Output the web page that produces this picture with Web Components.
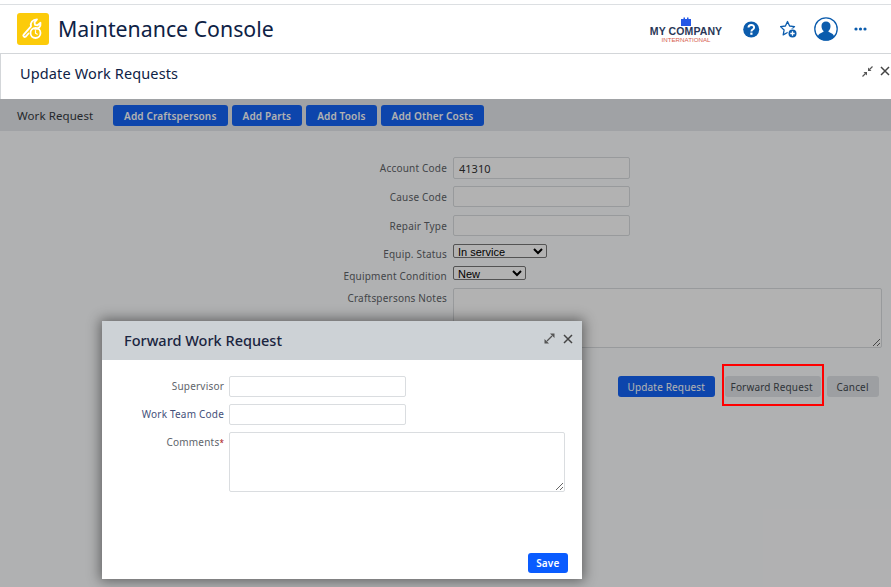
<!DOCTYPE html>
<html>
<head>
<meta charset="utf-8">
<title>Maintenance Console</title>
<style>
    html, body { margin: 0; height: 100%; }
    body { font-family: "Noto Sans", "Open Sans", sans-serif; background: #fff; overflow: hidden; }
</style>
</head>
<body>
<console-page>
    <app-header slot="header" title="Maintenance Console"></app-header>
    <panel-title slot="title" title="Update Work Requests"></panel-title>
    <work-toolbar slot="toolbar" label="Work Request">
        <action-button>Add Craftspersons</action-button>
        <action-button>Add Parts</action-button>
        <action-button>Add Tools</action-button>
        <action-button>Add Other Costs</action-button>
    </work-toolbar>
    <request-form slot="form"></request-form>
    <forward-dialog slot="dialog" title="Forward Work Request"></forward-dialog>
</console-page>

<script>
class ConsolePage extends HTMLElement{
    constructor(){
        super();
        this.attachShadow({mode : "open"}).innerHTML = `
            <style>
                :host{ display: flex; flex-direction: column; height: 587px; }
                .content{ position: relative; flex: 1; background: #fdfeff; }
                .backdrop{ position: absolute; inset: 0; background: rgba(0,0,0,.3); }
                .dialog{ position: absolute; left: 102px; top: 222px; }
                .highlight{ position: absolute; left: 722px; top: 265px; width: 98px; height: 38px; border: 2px solid #f00; }
            </style>
            <slot name="header"></slot>
            <slot name="title"></slot>
            <div class="content">
                <slot name="toolbar"></slot>
                <slot name="form"></slot>
                <div class="backdrop"></div>
                <div class="highlight"></div>
                <div class="dialog"><slot name="dialog"></slot></div>
            </div>
        `;
    }
}

class AppHeader extends HTMLElement{
    constructor(){
        super();
        this.attachShadow({mode : "open"}).innerHTML = `
            <style>
                :host{ display: flex; align-items: center; height: 48px; margin-top: 4px; padding: 0 24px 0 17px;
                    border-top: 1px solid #dcdfe2; border-bottom: 1px solid #d3d6d9; background: #fff; }
                .app-icon{ width: 32px; height: 32px; border-radius: 3px; background: #fccb0a; margin-right: 9px; display: block; }
                h1{ margin: 0; font-size: 21.300px; line-height: 30px; font-weight: 400; color: #0e2245; flex: 1; padding-bottom: 1px; }
                .logo{ display: flex; flex-direction: column; align-items: center; width: 74px; margin-right: 20px; margin-top: 1px; }
                .logo svg{ display: block; height: 9px; }
                .logo b{ font: 700 10.500px/11px "Liberation Sans", sans-serif; color: #2a3858; white-space: nowrap; letter-spacing: .1px; }
                .logo span{ font: 400 6.200px/6px "Liberation Sans", sans-serif; color: #d6604f; }
                .tools{ display: flex; align-items: center; }
                .tools svg{ display: block; }
            </style>
            <svg class="app-icon" viewBox="0 0 32 32">
                <g fill="none" stroke="#fff" stroke-linecap="round" stroke-linejoin="round">
                    <path stroke-width="1.800" d="M11.500 20.500l-3 3.300c-1.200 .8-2.800-1-2-2l7.500-8.500c-1-3.500 1.500-7 6-7l-2.500 3 .5 2.500 2.500 .5 3-2.500c.5 3.500-2 6.500-5.500 6"/>
                    <circle stroke-width="1.800" cx="18.500" cy="20" r="5"/>
                    <path stroke-width="1.200" d="M18.500 17.500v2.700l1.800 1"/>
                </g>
            </svg>
            <h1>${this.getAttribute("title")}</h1>
            <div class="logo">
                <svg viewBox="0 0 10 9" width="10"><path fill="#2458e6" d="M0 2h2.500V.5h1.500V2h2V.5h1.500V2H10v7H0z"/></svg>
                <b>MY COMPANY</b>
                <span>INTERNATIONAL</span>
            </div>
            <div class="tools">
                <svg width="17" height="17" viewBox="0 0 17 17" style="margin-right:20px">
                    <circle cx="8.200" cy="8.500" r="8" fill="#0b5cad"/>
                    <path d="M5.500 6.600c0-3.500 5.600-3.500 5.600-.2 0 2.200-2.700 2-2.700 4" fill="none" stroke="#fff" stroke-width="2"/>
                    <rect x="7.300" y="11.600" width="2.200" height="2.200" fill="#fff"/>
                </svg>
                <svg width="18" height="19" viewBox="0 0 18 19" style="margin-right:16px">
                    <path d="M7.500 1.500l2.100 4.500 4.900.6-3.600 3.400.9 4.900-4.300-2.400-4.300 2.400.9-4.900L.5 6.600l4.900-.6z" fill="none" stroke="#0b5cad" stroke-width="1.300" stroke-linejoin="round"/>
                    <circle cx="12.500" cy="13.500" r="5" fill="#fff"/>
                    <circle cx="12.500" cy="13.500" r="4" fill="#0b5cad"/>
                    <path d="M12.500 11.300v4.400M10.300 13.500h4.400" stroke="#fff" stroke-width="1.300"/>
                </svg>
                <svg width="24" height="24" viewBox="0 0 24 24" style="margin-right:16px">
                    <circle cx="12" cy="12" r="11.200" fill="#fff" stroke="#0b5cad" stroke-width="1.300"/>
                    <path d="M3.800 19.700c.6-3.700 5-3.700 6-5.500-1.600-1.300-2.300-3-2.300-5.200 0-2.800 1.800-4.500 4.500-4.500s4.500 1.700 4.500 4.500c0 2.200-.7 3.900-2.300 5.200 1 1.800 5.400 1.800 6 5.500-2 2.300-5 3.700-8.200 3.700s-6.200-1.400-8.200-3.700z" fill="#0b5cad"/>
                </svg>
                <svg width="13" height="4" viewBox="0 0 13 4">
                    <circle cx="2" cy="2" r="1.600" fill="#0b5cad"/><circle cx="6.500" cy="2" r="1.600" fill="#0b5cad"/><circle cx="11" cy="2" r="1.600" fill="#0b5cad"/>
                </svg>
            </div>
        `;
    }
}

class PanelTitle extends HTMLElement{
    constructor(){
        super();
        this.attachShadow({mode : "open"}).innerHTML = `
            <style>
                :host{ display: flex; align-items: center; height: 45px; padding: 0 1px 0 20px; background: #fff;
                    border-left: 1px solid #d3d6d9; box-sizing: border-box; }
                h2{ margin: 0; flex: 1; font-size: 14.500px; font-weight: 400; color: #0e2245; margin-left: -1px; padding-bottom: 7px; letter-spacing: .13px; }
                svg{ display: block; margin-bottom: 11px; }
            </style>
            <h2>${this.getAttribute("title")}</h2>
            <svg width="11" height="11" viewBox="0 0 11 11" style="margin-right:7px"><path d="M10.500 .5L7.500 3.500M3.500 7.500L.5 10.500" stroke="#555" stroke-width="1.200"/><path d="M6 5V1.500L9.500 5zM5 6v3.500L1.500 6z" fill="#555"/></svg>
            <svg width="10" height="10" viewBox="0 0 10 10"><path d="M1 1l8 8M9 1l-8 8" stroke="#444" stroke-width="1.500"/></svg>
        `;
    }
}

class WorkToolbar extends HTMLElement{
    constructor(){
        super();
        this.attachShadow({mode : "open"}).innerHTML = `
            <style>
                :host{ display: flex; align-items: center; gap: 4px; height: 32px; padding-left: 17px; background: #e6e9ed; box-sizing: border-box; }
                span{ font-size: 11.500px; color: #34393f; width: 92px; letter-spacing: .08px; padding-top: 1px; }
            </style>
            <span>${this.getAttribute("label")}</span>
            <slot></slot>
        `;
    }
}

class ActionButton extends HTMLElement{
    constructor(){
        super();
        this.attachShadow({mode : "open"}).innerHTML = `
            <style>
                :host{ display: inline-block; height: var(--h, 21px); padding: 0 var(--pad, 11px); border-radius: 3px;
                    background: var(--bg, #1464f6); color: var(--fg, #fff); font-size: 10px; font-weight: var(--weight, 600);
                    line-height: calc(var(--h, 21px) + var(--nudge, 2px)); white-space: nowrap; letter-spacing: .16px; }
            </style>
            <slot></slot>
        `;
    }
}

class FormRow extends HTMLElement{
    static get observedAttributes(){
        return ["label"];
    }
    constructor(){
        super();
        this.attachShadow({mode : "open"}).innerHTML = `
            <style>
                :host{ display: flex; gap: var(--label-gap, 6px); margin-bottom: var(--row-gap, 7px); }
                label{ width: var(--label-width, 447px); box-sizing: border-box; text-align: right; font-size: 10px; line-height: 14px;
                    padding-top: var(--label-top, 4px); color: var(--label-color, #5f6469); letter-spacing: .2px; white-space: nowrap; }
                label i{ font-style: normal; font-size: 8px; color: #a11; }
                .field{ flex: 1; display: flex; }
            </style>
            <label></label>
            <div class="field"><slot></slot></div>
        `;
    }
    attributeChangedCallback(attrName, oldValue, newValue){
        if(attrName==="label"){
            const star = this.hasAttribute("required") ? "<i>*</i>" : "";
            this.shadowRoot.querySelector("label").innerHTML = newValue + star;
        }
    }
}

const fieldStyles = `
    input, textarea{ box-sizing: border-box; display: block; border: 1px solid #dadde0; border-radius: 2px; background: #fff;
        margin: 0; padding: 0 5px; font: 400 11px "Noto Sans", sans-serif; color: #333; outline: none; }
    input{ width: 177px; height: 21px; }
    textarea{ height: 60px; }
    select{ display: block; margin: 0; border: 1px solid #777; border-radius: 2px; background: #fff; color: #000;
        font: 400 11px/13px "Liberation Sans", sans-serif; padding: 0; }
`;

class RequestForm extends HTMLElement{
    constructor(){
        super();
        this.attachShadow({mode : "open"}).innerHTML = `
            <style>
                :host{ display: block; padding-top: 26px; }
                ${fieldStyles}
                form-row{ --label-width: 447px; }
                .cause, .repair{ --row-gap: 8px; }
                .status, .condition{ --row-gap: 8px; --label-top: 3px; height: 14px; }
                .notes{ --label-top: 3px; }
                textarea{ width: 429px; }
                select.status-field{ width: 94px; height: 14px; }
                select.condition-field{ width: 73px; height: 14px; }
                .actions{ display: flex; padding: 21px 0 0 618px; }
                .actions action-button{ --weight: 400; }
                .actions .update{ --pad: 9.500px; margin-right: 10px; }
                .actions .forward{ --bg: #e1e4e8; --fg: #444b52; --pad: 6px; width: 84px; margin-right: 6px; }
                .actions .cancel{ --bg: #e1e4e8; --fg: #444b52; --pad: 10px; }
            </style>
            <form-row label="Account Code"><input value="41310" style="height:22px"></form-row>
            <form-row class="cause" label="Cause Code"><input></form-row>
            <form-row class="repair" label="Repair Type"><input></form-row>
            <form-row class="status" label="Equip. Status"><select class="status-field"><option>In service</option></select></form-row>
            <form-row class="condition" label="Equipment Condition"><select class="condition-field"><option>New</option></select></form-row>
            <form-row class="notes" label="Craftspersons Notes"><textarea></textarea></form-row>
            <div class="actions">
                <action-button class="update">Update Request</action-button>
                <action-button class="forward">Forward Request</action-button>
                <action-button class="cancel">Cancel</action-button>
            </div>
        `;
    }
}

class ForwardDialog extends HTMLElement{
    constructor(){
        super();
        this.attachShadow({mode : "open"}).innerHTML = `
            <style>
                :host{ display: flex; flex-direction: column; width: 480px; height: 258px; background: #fff;
                    box-shadow: 0 0 12px 2px rgba(0,0,0,.45); }
                ${fieldStyles}
                header{ display: flex; align-items: center; height: 39px; padding: 0 9px 0 22px; background: #cdd2d6; }
                h3{ flex: 1; margin: 0; font-size: 14.500px; font-weight: 500; color: #1a2540; padding-bottom: 2px; }
                header svg{ display: block; margin-left: 8px; margin-bottom: 4px; }
                .body{ flex: 1; padding-top: 16px; }
                form-row{ --label-width: 122px; --label-gap: 5px; --label-top: 3px; --label-color: #60646b; }
                textarea{ width: 336px; }
                .blue{ --label-color: #44507a; }
                footer{ display: flex; justify-content: flex-end; padding: 0 14px 6px 0; }
                action-button{ --bg: #0a5cff; --pad: 8.500px; --h: 20px; --nudge: 0px; }
            </style>
            <header>
                <h3>${this.getAttribute("title")}</h3>
                <svg width="11" height="11" viewBox="0 0 11 11"><path d="M3 8L8 3" stroke="#555" stroke-width="1.300"/><path d="M6 .5h4.500V5zM.5 6v4.500H5z" fill="#555"/></svg>
                <svg width="10" height="10" viewBox="0 0 10 10"><path d="M1 1l8 8M9 1l-8 8" stroke="#444" stroke-width="1.500"/></svg>
            </header>
            <div class="body">
                <form-row label="Supervisor"><input></form-row>
                <form-row class="blue" label="Work Team Code"><input></form-row>
                <form-row required label="Comments"><textarea></textarea></form-row>
            </div>
            <footer><action-button>Save</action-button></footer>
        `;
    }
}

customElements.define("console-page", ConsolePage);
customElements.define("app-header", AppHeader);
customElements.define("panel-title", PanelTitle);
customElements.define("work-toolbar", WorkToolbar);
customElements.define("action-button", ActionButton);
customElements.define("form-row", FormRow);
customElements.define("request-form", RequestForm);
customElements.define("forward-dialog", ForwardDialog);
</script>
</body>
</html>
